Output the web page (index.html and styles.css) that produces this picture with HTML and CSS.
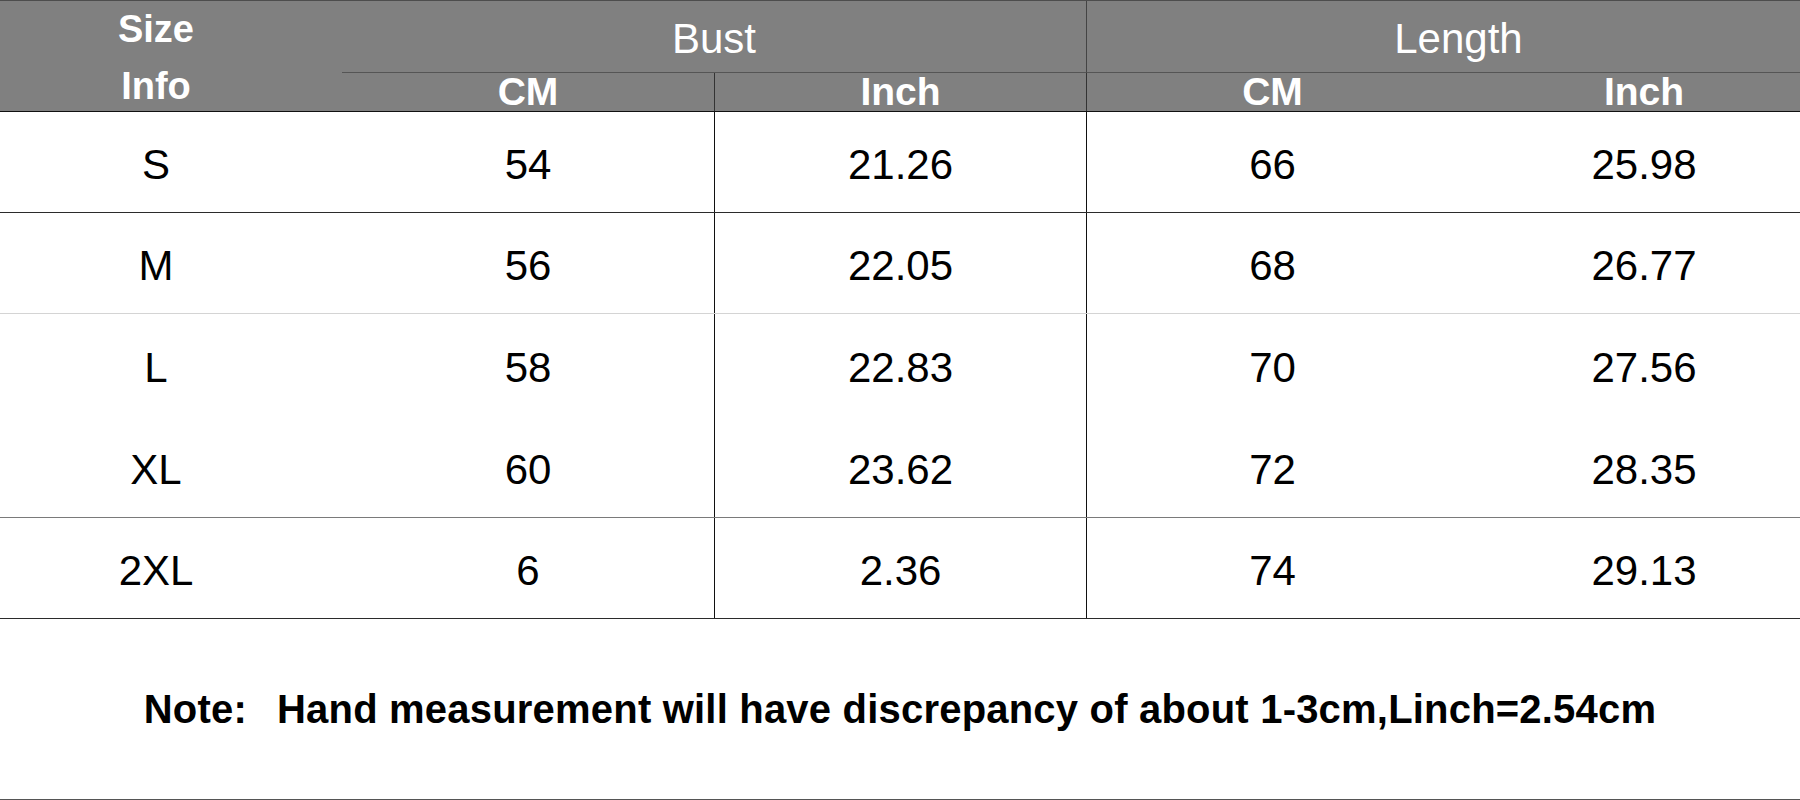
FILE: index.html
```html
<!DOCTYPE html>
<html lang="en">
<head>
<meta charset="utf-8">
<title>Size Chart</title>
<link rel="stylesheet" href="styles.css">
</head>
<body>
<div class="page">
  <div class="sheet">
    <div class="head">
      <div class="h-size">Size<br>Info</div>
      <div class="h-group h-bust">Bust</div>
      <div class="h-group h-length">Length</div>
      <div class="h-sub">CM</div>
      <div class="h-sub vline">Inch</div>
      <div class="h-sub vline">CM</div>
      <div class="h-sub">Inch</div>
    </div>
    <div class="row line-dark">
      <div class="cell">S</div><div class="cell">54</div><div class="cell vline">21.26</div><div class="cell vline">66</div><div class="cell">25.98</div>
    </div>
    <div class="row line-light">
      <div class="cell">M</div><div class="cell">56</div><div class="cell vline">22.05</div><div class="cell vline">68</div><div class="cell">26.77</div>
    </div>
    <div class="row tall">
      <div class="cell">L</div><div class="cell">58</div><div class="cell vline">22.83</div><div class="cell vline">70</div><div class="cell">27.56</div>
    </div>
    <div class="row tall line-mid">
      <div class="cell">XL</div><div class="cell">60</div><div class="cell vline">23.62</div><div class="cell vline">72</div><div class="cell">28.35</div>
    </div>
    <div class="row line-dark">
      <div class="cell">2XL</div><div class="cell">6</div><div class="cell vline">2.36</div><div class="cell vline">74</div><div class="cell">29.13</div>
    </div>
  </div>
  <div class="note"><span class="note-label">Note:</span> Hand measurement will have discrepancy of about 1-3cm,Linch=2.54cm</div>
</div>
</body>
</html>
```
FILE: styles.css
```css
* { box-sizing: border-box; }
html, body { margin: 0; padding: 0; background: #fff; }
body { font-family: "Liberation Sans", Arial, Helvetica, sans-serif; color: #000; }

.page { width: 1800px; height: 800px; overflow: hidden; }

.sheet { width: 1860px; margin-left: -30px; }

.head {
  display: grid;
  grid-template-columns: repeat(5, 372px);
  grid-template-rows: 72px 38px;
  background: #808080;
  color: #fff;
  border-top: 1px solid #4d4d4d;
  border-bottom: 1px solid #111;
}

.h-size {
  grid-column: 1;
  grid-row: 1 / span 2;
  text-align: center;
  font-weight: 700;
  font-size: 38px;
  line-height: 57px;
  white-space: nowrap;
}

.h-group {
  grid-row: 1;
  text-align: center;
  font-size: 42px;
  font-weight: 400;
  line-height: 67px;
  padding-top: 4px;
  border-bottom: 1px solid #555;
}
.h-bust { grid-column: 2 / span 2; }
.h-length { grid-column: 4 / span 2; border-left: 1px solid #444; }

.h-sub {
  grid-row: 2;
  text-align: center;
  font-weight: 700;
  font-size: 39px;
  line-height: 38px;
}
.h-sub.vline { border-left: 1px solid #333; }

.row {
  display: grid;
  grid-template-columns: repeat(5, 372px);
  height: 101px;
}
.row.tall { height: 102px; }
.line-dark { border-bottom: 1px solid #2b2b2b; }
.line-light { border-bottom: 1px solid #d4d4d4; }
.line-mid { border-bottom: 1px solid #7a7a7a; }

.cell {
  display: flex;
  align-items: center;
  justify-content: center;
  padding-top: 6px;
  font-size: 42px;
  line-height: 1;
}
.cell.vline { border-left: 1px solid #111; }

.note {
  height: 181px;
  display: flex;
  align-items: center;
  justify-content: center;
  font-weight: 700;
  font-size: 40px;
  letter-spacing: 0.2px;
  line-height: 1;
  white-space: nowrap;
  border-bottom: 1px solid #555;
}
.note-label { margin-right: 30px; }
```
